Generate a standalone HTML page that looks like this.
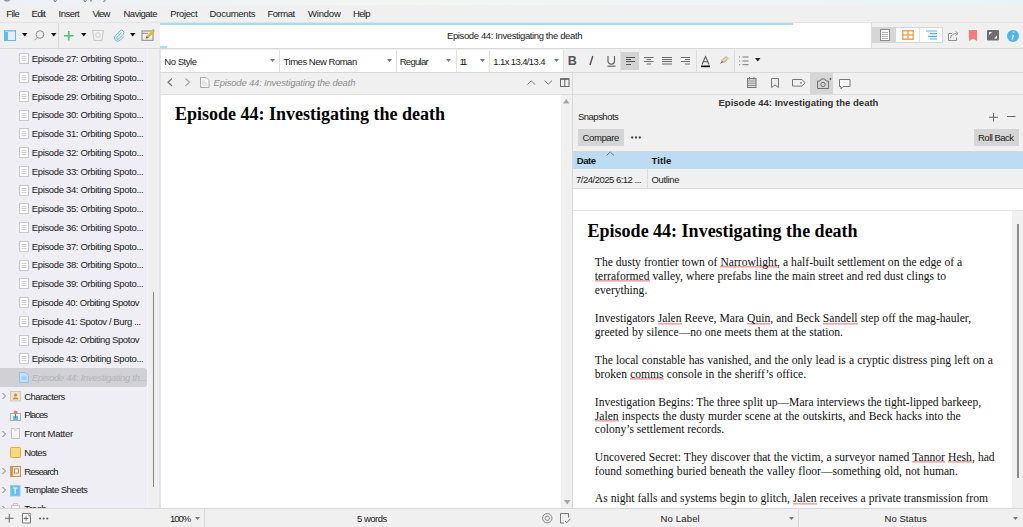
<!DOCTYPE html>
<html><head><meta charset="utf-8">
<style>
*{margin:0;padding:0;box-sizing:border-box}
html,body{width:1023px;height:527px;overflow:hidden;background:#f0f0f0;font-family:"Liberation Sans",sans-serif;font-size:9.5px;color:#1a1a1a}
.a{position:absolute}
.t{position:absolute;white-space:nowrap;line-height:11px}
svg{position:absolute;overflow:visible}
.p{position:absolute;left:594.8px;white-space:nowrap;font-family:"Liberation Serif",serif;font-size:11.6px;line-height:13.92px;color:#111}
.p u{text-decoration:none;background:linear-gradient(#f4a4a4,#f4a4a4) no-repeat 0 calc(100% - 0.8px)/100% 1.6px}
.h{position:absolute;white-space:nowrap;font-family:"Liberation Serif",serif;font-weight:bold;font-size:18px;line-height:20px;color:#000}
</style></head><body>

<div class="a" style="left:0;top:0;width:1023px;height:4.5px;background:linear-gradient(90deg,#edf1f6,#f2f5f2 40%,#eef5f5 70%,#e9f3f5)"></div>
<svg style="left:3px;top:-3px" width="9" height="5"><circle cx="4" cy="1" r="3.8" fill="#9a9a9a"/></svg>
<svg style="left:53px;top:0" width="60" height="3"><path d="M1 0.3c0 1.2 1.5 1.4 2.5 0.3M31 0.3c0 1.2 1.5 1.4 2.5 0.3M38 0v1.6M52 0.3c0 1 -1 1.4 -1.5 1" fill="none" stroke="#333" stroke-width="0.9"/></svg>
<div class="a" style="left:0;top:5px;width:1023px;height:17px;background:#f0f0f0"></div>
<div class="a" style="left:0;top:22px;width:1023px;height:1px;background:#e2e2e2"></div>
<div class="a" style="left:0;top:48px;width:1023px;height:1px;background:#d8d8d8"></div>
<div class="a" style="left:58px;top:23px;width:1px;height:25px;background:#d8d8d8"></div>
<div class="a" style="left:160px;top:23px;width:711px;height:25px;background:#fff"></div>
<div class="a" style="left:160px;top:23px;width:633px;height:2px;background:#a6def8"></div>
<div class="a" style="left:160px;top:46px;width:7px;height:2px;background:#a6def8"></div>
<div class="a" style="left:871px;top:23px;width:1px;height:25px;background:#dcdcdc"></div>
<div class="a" style="left:0;top:49px;width:147.5px;height:459px;background:#eeeef4"></div>
<div class="a" style="left:147.5px;top:49px;width:12.5px;height:459px;background:#f0f0f0"></div>
<div class="a" style="left:146.5px;top:49px;width:1.5px;height:459px;background:#f6f6f8"></div>
<div class="a" style="left:153px;top:292px;width:1.2px;height:195px;background:#858585"></div>
<div class="a" style="left:159px;top:49px;width:1.8px;height:459px;background:#e4e4e4"></div>
<div class="a" style="left:160px;top:72px;width:863px;height:1px;background:#d8d8d8"></div>
<div class="a" style="left:161px;top:50px;width:118px;height:22px;background:#fff"></div>
<div class="a" style="left:280px;top:50px;width:116px;height:22px;background:#fff"></div>
<div class="a" style="left:396px;top:50px;width:59.5px;height:22px;background:#fff"></div>
<div class="a" style="left:456px;top:50px;width:33.5px;height:22px;background:#fff"></div>
<div class="a" style="left:490px;top:50px;width:73px;height:22px;background:#fff"></div>
<div class="a" style="left:279.3px;top:50px;width:1px;height:22px;background:#e0e0e0"></div>
<div class="a" style="left:395.6px;top:50px;width:1px;height:22px;background:#e0e0e0"></div>
<div class="a" style="left:455.5px;top:50px;width:1px;height:22px;background:#e0e0e0"></div>
<div class="a" style="left:489.4px;top:50px;width:1px;height:22px;background:#e0e0e0"></div>
<div class="a" style="left:160.5px;top:94px;width:400.5px;height:414px;background:#fff"></div>
<div class="a" style="left:160.5px;top:93.5px;width:412px;height:1px;background:#dcdcdc"></div>
<div class="a" style="left:572px;top:73px;width:1px;height:435px;background:#d8d8d8"></div>
<div class="a" style="left:810px;top:73px;width:23px;height:21px;background:#d6d6d6"></div>
<div class="a" style="left:573px;top:94px;width:450px;height:1px;background:#dcdcdc"></div>
<div class="a" style="left:578px;top:129px;width:46px;height:17px;background:#d5d5d5"></div>
<div class="a" style="left:974px;top:129px;width:45px;height:17px;background:#d5d5d5"></div>
<div class="a" style="left:573px;top:151px;width:450px;height:18px;background:#bcdcf3"></div>
<div class="a" style="left:573px;top:150.5px;width:450px;height:1px;background:#d6d6d6"></div>
<div class="a" style="left:573px;top:169px;width:450px;height:19px;background:#f0f0f0"></div>
<div class="a" style="left:647px;top:169px;width:1px;height:19px;background:#dcdcdc"></div>
<div class="a" style="left:573px;top:188px;width:450px;height:1px;background:#dcdcdc"></div>
<div class="a" style="left:573px;top:189px;width:450px;height:21px;background:#fff"></div>
<div class="a" style="left:573px;top:210px;width:450px;height:1px;background:#e4e4e4"></div>
<div class="a" style="left:573px;top:211px;width:439px;height:297px;background:#fff"></div>
<div class="a" style="left:1012px;top:211px;width:11px;height:297px;background:#f0f0f0"></div>
<div class="a" style="left:1017px;top:224px;width:1.5px;height:254px;background:#8a8a8a"></div>
<div class="a" style="left:0;top:508px;width:1023px;height:1px;background:#d8d8d8"></div>
<div class="a" style="left:204px;top:509px;width:1px;height:18px;background:#d8d8d8"></div>
<div class="a" style="left:798px;top:509px;width:1px;height:18px;background:#d8d8d8"></div>

<div class="a" style="left:0;top:49px;width:147.5px;height:459px;overflow:hidden"><div class="a" style="left:0;top:-49px;width:147.5px;height:600px">
<svg style="left:18.5px;top:53.30px" width="10" height="11"><rect x="0.5" y="0.5" width="9" height="10" fill="#fff" stroke="#c8c8c8"/><path d="M2.5 3.5h5M2.5 5.5h5M2.5 7.5h5" stroke="#d0d0d0" stroke-width="1"/></svg>
<svg style="left:18.5px;top:72.05px" width="10" height="11"><rect x="0.5" y="0.5" width="9" height="10" fill="#fff" stroke="#c8c8c8"/><path d="M2.5 3.5h5M2.5 5.5h5M2.5 7.5h5" stroke="#d0d0d0" stroke-width="1"/></svg>
<svg style="left:18.5px;top:90.80px" width="10" height="11"><rect x="0.5" y="0.5" width="9" height="10" fill="#fff" stroke="#c8c8c8"/><path d="M2.5 3.5h5M2.5 5.5h5M2.5 7.5h5" stroke="#d0d0d0" stroke-width="1"/></svg>
<svg style="left:18.5px;top:109.55px" width="10" height="11"><rect x="0.5" y="0.5" width="9" height="10" fill="#fff" stroke="#c8c8c8"/><path d="M2.5 3.5h5M2.5 5.5h5M2.5 7.5h5" stroke="#d0d0d0" stroke-width="1"/></svg>
<svg style="left:18.5px;top:128.30px" width="10" height="11"><rect x="0.5" y="0.5" width="9" height="10" fill="#fff" stroke="#c8c8c8"/><path d="M2.5 3.5h5M2.5 5.5h5M2.5 7.5h5" stroke="#d0d0d0" stroke-width="1"/></svg>
<svg style="left:18.5px;top:147.05px" width="10" height="11"><rect x="0.5" y="0.5" width="9" height="10" fill="#fff" stroke="#c8c8c8"/><path d="M2.5 3.5h5M2.5 5.5h5M2.5 7.5h5" stroke="#d0d0d0" stroke-width="1"/></svg>
<svg style="left:18.5px;top:165.80px" width="10" height="11"><rect x="0.5" y="0.5" width="9" height="10" fill="#fff" stroke="#c8c8c8"/><path d="M2.5 3.5h5M2.5 5.5h5M2.5 7.5h5" stroke="#d0d0d0" stroke-width="1"/></svg>
<svg style="left:18.5px;top:184.55px" width="10" height="11"><rect x="0.5" y="0.5" width="9" height="10" fill="#fff" stroke="#c8c8c8"/><path d="M2.5 3.5h5M2.5 5.5h5M2.5 7.5h5" stroke="#d0d0d0" stroke-width="1"/></svg>
<svg style="left:18.5px;top:203.30px" width="10" height="11"><rect x="0.5" y="0.5" width="9" height="10" fill="#fff" stroke="#c8c8c8"/><path d="M2.5 3.5h5M2.5 5.5h5M2.5 7.5h5" stroke="#d0d0d0" stroke-width="1"/></svg>
<svg style="left:18.5px;top:222.05px" width="10" height="11"><rect x="0.5" y="0.5" width="9" height="10" fill="#fff" stroke="#c8c8c8"/><path d="M2.5 3.5h5M2.5 5.5h5M2.5 7.5h5" stroke="#d0d0d0" stroke-width="1"/></svg>
<svg style="left:18.5px;top:240.80px" width="10" height="11"><rect x="0.5" y="0.5" width="9" height="10" fill="#fff" stroke="#c8c8c8"/><path d="M2.5 3.5h5M2.5 5.5h5M2.5 7.5h5" stroke="#d0d0d0" stroke-width="1"/></svg>
<svg style="left:18.5px;top:259.55px" width="10" height="11"><rect x="0.5" y="0.5" width="9" height="10" fill="#fff" stroke="#c8c8c8"/><path d="M2.5 3.5h5M2.5 5.5h5M2.5 7.5h5" stroke="#d0d0d0" stroke-width="1"/></svg>
<svg style="left:18.5px;top:278.30px" width="10" height="11"><rect x="0.5" y="0.5" width="9" height="10" fill="#fff" stroke="#c8c8c8"/><path d="M2.5 3.5h5M2.5 5.5h5M2.5 7.5h5" stroke="#d0d0d0" stroke-width="1"/></svg>
<svg style="left:18.5px;top:297.05px" width="10" height="11"><rect x="0.5" y="0.5" width="9" height="10" fill="#fff" stroke="#c8c8c8"/><path d="M2.5 3.5h5M2.5 5.5h5M2.5 7.5h5" stroke="#d0d0d0" stroke-width="1"/></svg>
<svg style="left:18.5px;top:315.80px" width="10" height="11"><rect x="0.5" y="0.5" width="9" height="10" fill="#fff" stroke="#c8c8c8"/><path d="M2.5 3.5h5M2.5 5.5h5M2.5 7.5h5" stroke="#d0d0d0" stroke-width="1"/></svg>
<svg style="left:18.5px;top:334.55px" width="10" height="11"><rect x="0.5" y="0.5" width="9" height="10" fill="#fff" stroke="#c8c8c8"/><path d="M2.5 3.5h5M2.5 5.5h5M2.5 7.5h5" stroke="#d0d0d0" stroke-width="1"/></svg>
<svg style="left:18.5px;top:353.30px" width="10" height="11"><rect x="0.5" y="0.5" width="9" height="10" fill="#fff" stroke="#c8c8c8"/><path d="M2.5 3.5h5M2.5 5.5h5M2.5 7.5h5" stroke="#d0d0d0" stroke-width="1"/></svg>
<div class="a" style="left:0;top:367.85px;width:147px;height:19px;background:#d0d0d5;border-radius:0 3px 3px 0"></div>
<svg style="left:18.5px;top:372.05px" width="10" height="11"><path d="M0.5 0.5h6l3 3v7h-9z" fill="#bfe0f8" stroke="#8cc4ec"/><path d="M2.5 5h5M2.5 7h5" stroke="#8cc4ec" stroke-width="1"/></svg>
<svg style="left:1px;top:392.00px" width="6" height="8"><path d="M1.5 1l3 3l-3 3" fill="none" stroke="#777" stroke-width="1"/></svg>
<svg style="left:10px;top:390.80px" width="11" height="11"><rect x="0.5" y="0.5" width="10" height="9.5" fill="#f2e2c4" stroke="#c9c9c9"/><circle cx="5.5" cy="4" r="1.5" fill="#b98a45"/><path d="M2.5 8.2c0.8-2.4 5.2-2.4 6 0z" fill="#b98a45"/></svg>
<svg style="left:10px;top:409.55px" width="11" height="11"><rect x="0.5" y="3.5" width="10" height="7" fill="#e8f1f4" stroke="#aab"/><path d="M3 10V6h5v4" fill="#6fb8e8"/><circle cx="5.5" cy="2.5" r="2" fill="#f07b6b"/><path d="M5.5 4v4" stroke="#3a9a4a"/></svg>
<svg style="left:1px;top:429.50px" width="6" height="8"><path d="M1.5 1l3 3l-3 3" fill="none" stroke="#777" stroke-width="1"/></svg>
<svg style="left:10px;top:428.30px" width="11" height="11"><rect x="1.5" y="0.5" width="8" height="10" fill="#f4f4f4" stroke="#c4c4c4"/><rect x="4" y="0" width="3" height="3" fill="#ddd"/></svg>
<svg style="left:10px;top:447.05px" width="11" height="11"><rect x="0.5" y="0.5" width="10" height="10" rx="1" fill="#f8d77a" stroke="#d9ac40"/></svg>
<svg style="left:1px;top:467.00px" width="6" height="8"><path d="M1.5 1l3 3l-3 3" fill="none" stroke="#777" stroke-width="1"/></svg>
<svg style="left:10px;top:465.80px" width="11" height="11"><rect x="0.5" y="0.5" width="10" height="10" fill="#f7e6c6" stroke="#c4925a"/><rect x="0.5" y="0.5" width="2.5" height="10" fill="#d39a58"/><rect x="4.5" y="3" width="4" height="4" fill="#fff" stroke="#b07a40" stroke-width="0.8"/></svg>
<svg style="left:1px;top:485.75px" width="6" height="8"><path d="M1.5 1l3 3l-3 3" fill="none" stroke="#777" stroke-width="1"/></svg>
<svg style="left:10px;top:484.55px" width="11" height="11"><rect x="0.5" y="0.5" width="9.5" height="10.5" fill="#66bdf2" stroke="#8ccdf5"/><path d="M2.8 3h4.8M5.2 3v6" stroke="#fff" stroke-width="1.1"/></svg>
<svg style="left:1px;top:504.50px" width="6" height="8"><path d="M1.5 1l3 3l-3 3" fill="none" stroke="#777" stroke-width="1"/></svg>
<svg style="left:10px;top:503.30px" width="11" height="11"><rect x="1.5" y="2.5" width="8" height="8" fill="#f4f4f4" stroke="#c4c4c4"/><rect x="3.5" y="0.5" width="4" height="2" fill="none" stroke="#c4c4c4"/></svg>
<div class="t" style="left:31.70px;top:53.00px;letter-spacing:-0.336px;">Episode 27: Orbiting Spoto...</div>
<div class="t" style="left:31.70px;top:71.75px;letter-spacing:-0.336px;">Episode 28: Orbiting Spoto...</div>
<div class="t" style="left:31.70px;top:90.50px;letter-spacing:-0.336px;">Episode 29: Orbiting Spoto...</div>
<div class="t" style="left:31.70px;top:109.25px;letter-spacing:-0.336px;">Episode 30: Orbiting Spoto...</div>
<div class="t" style="left:31.70px;top:128.00px;letter-spacing:-0.336px;">Episode 31: Orbiting Spoto...</div>
<div class="t" style="left:31.70px;top:146.75px;letter-spacing:-0.336px;">Episode 32: Orbiting Spoto...</div>
<div class="t" style="left:31.70px;top:165.50px;letter-spacing:-0.336px;">Episode 33: Orbiting Spoto...</div>
<div class="t" style="left:31.70px;top:184.25px;letter-spacing:-0.336px;">Episode 34: Orbiting Spoto...</div>
<div class="t" style="left:31.70px;top:203.00px;letter-spacing:-0.336px;">Episode 35: Orbiting Spoto...</div>
<div class="t" style="left:31.70px;top:221.75px;letter-spacing:-0.336px;">Episode 36: Orbiting Spoto...</div>
<div class="t" style="left:31.70px;top:240.50px;letter-spacing:-0.336px;">Episode 37: Orbiting Spoto...</div>
<div class="t" style="left:31.70px;top:259.25px;letter-spacing:-0.336px;">Episode 38: Orbiting Spoto...</div>
<div class="t" style="left:31.70px;top:278.00px;letter-spacing:-0.336px;">Episode 39: Orbiting Spoto...</div>
<div class="t" style="left:31.70px;top:296.75px;letter-spacing:-0.400px;">Episode 40: Orbiting Spotov</div>
<div class="t" style="left:31.70px;top:315.50px;letter-spacing:-0.411px;">Episode 41: Spotov / Burg ...</div>
<div class="t" style="left:31.70px;top:334.25px;letter-spacing:-0.400px;">Episode 42: Orbiting Spotov</div>
<div class="t" style="left:31.70px;top:353.00px;letter-spacing:-0.336px;">Episode 43: Orbiting Spoto...</div>
<div class="t" style="left:31.70px;top:371.75px;letter-spacing:-0.313px;font-style:italic;color:#b4b4bc">Episode 44: Investigating th...</div>
<div class="t" style="left:24.30px;top:390.50px;letter-spacing:-0.611px;">Characters</div>
<div class="t" style="left:24.30px;top:409.25px;letter-spacing:-0.960px;">Places</div>
<div class="t" style="left:24.30px;top:428.00px;letter-spacing:-0.264px;">Front Matter</div>
<div class="t" style="left:24.30px;top:446.75px;letter-spacing:-0.575px;">Notes</div>
<div class="t" style="left:24.30px;top:465.50px;letter-spacing:-0.914px;">Research</div>
<div class="t" style="left:24.30px;top:484.25px;letter-spacing:-0.521px;">Template Sheets</div>
<div class="t" style="left:24.30px;top:503.00px;letter-spacing:-0.400px;">Trash</div>
</div></div>
<div class="t" style="left:6.30px;top:7.70px;letter-spacing:-0.600px;">File</div>
<div class="t" style="left:31.60px;top:7.70px;letter-spacing:-0.700px;">Edit</div>
<div class="t" style="left:58.50px;top:7.70px;letter-spacing:-0.500px;">Insert</div>
<div class="t" style="left:92.50px;top:7.70px;letter-spacing:-0.833px;">View</div>
<div class="t" style="left:123.50px;top:7.70px;letter-spacing:-0.500px;">Navigate</div>
<div class="t" style="left:170.30px;top:7.70px;letter-spacing:-0.383px;">Project</div>
<div class="t" style="left:209.50px;top:7.70px;letter-spacing:-0.250px;">Documents</div>
<div class="t" style="left:267.50px;top:7.70px;letter-spacing:-0.500px;">Format</div>
<div class="t" style="left:308.00px;top:7.70px;letter-spacing:-0.200px;">Window</div>
<div class="t" style="left:353.00px;top:7.70px;letter-spacing:-0.667px;">Help</div>
<div class="t" style="left:447.00px;top:30.20px;letter-spacing:-0.382px;">Episode 44: Investigating the death</div>
<div class="t" style="left:164.30px;top:55.80px;letter-spacing:-0.457px;">No Style</div>
<div class="t" style="left:283.60px;top:55.80px;letter-spacing:-0.486px;">Times New Roman</div>
<div class="t" style="left:399.70px;top:55.80px;letter-spacing:-0.717px;">Regular</div>
<div class="t" style="left:459.50px;top:55.80px;letter-spacing:-2.000px;">11</div>
<div class="t" style="left:493.30px;top:55.80px;letter-spacing:-0.615px;">1.1x 13.4/13.4</div>
<div class="t" style="left:213.50px;top:77.20px;letter-spacing:-0.191px;font-style:italic;color:#8c8c8c">Episode 44: Investigating the death</div>
<div class="t" style="left:718.50px;top:97.00px;letter-spacing:0.015px;font-weight:bold;color:#333">Episode 44: Investigating the death</div>
<div class="t" style="left:578.00px;top:111.10px;letter-spacing:-0.513px;">Snapshots</div>
<div class="t" style="left:582.60px;top:132.00px;letter-spacing:-0.400px;">Compare</div>
<div class="t" style="left:978.00px;top:131.80px;letter-spacing:-0.500px;">Roll Back</div>
<div class="t" style="left:576.70px;top:155.00px;letter-spacing:-0.400px;font-weight:bold;color:#111">Date</div>
<div class="t" style="left:651.50px;top:155.00px;letter-spacing:0.125px;font-weight:bold;color:#111">Title</div>
<div class="t" style="left:576.00px;top:174.00px;letter-spacing:-0.500px;">7/24/2025 6:12 ...</div>
<div class="t" style="left:651.50px;top:174.00px;letter-spacing:-0.333px;">Outline</div>
<div class="t" style="left:170.00px;top:513.00px;letter-spacing:-1.000px;">100%</div>
<div class="t" style="left:357.00px;top:513.00px;letter-spacing:-0.500px;">5 words</div>
<div class="t" style="left:660.60px;top:513.00px;letter-spacing:0.157px;">No Label</div>
<div class="t" style="left:884.50px;top:513.00px;letter-spacing:0.062px;">No Status</div>
<div class="h" style="left:175px;top:104.4px">Episode 44: Investigating the death</div>
<div class="h" style="left:587.6px;top:220.9px">Episode 44: Investigating the death</div>
<div class="p" style="top:255.80px;word-spacing:0.077px">The dusty frontier town of <u>Narrowlight</u>, a half-built settlement on the edge of a</div>
<div class="p" style="top:269.72px;word-spacing:0.125px"><u>terraformed</u> valley, where prefabs line the main street and red dust clings to</div>
<div class="p" style="top:283.64px;word-spacing:0.000px">everything.</div>
<div class="p" style="top:312.08px;word-spacing:0.145px">Investigators <u>Jalen</u> Reeve, Mara <u>Quin</u>, and Beck <u>Sandell</u> step off the mag-hauler,</div>
<div class="p" style="top:326.00px;word-spacing:0.075px">greeted by silence—no one meets them at the station.</div>
<div class="p" style="top:353.84px;word-spacing:0.269px">The local constable has vanished, and the only lead is a cryptic distress ping left on a</div>
<div class="p" style="top:367.76px;word-spacing:0.250px">broken <u>comms</u> console in the sheriff’s office.</div>
<div class="p" style="top:395.60px;word-spacing:-0.056px">Investigation Begins: The three split up—Mara interviews the tight-lipped barkeep,</div>
<div class="p" style="top:409.52px;word-spacing:0.308px"><u>Jalen</u> inspects the dusty murder scene at the outskirts, and Beck hacks into the</div>
<div class="p" style="top:423.44px;word-spacing:-0.200px">colony’s settlement records.</div>
<div class="p" style="top:450.68px;word-spacing:0.208px">Uncovered Secret: They discover that the victim, a surveyor named <u>Tannor</u> <u>Hesh</u>, had</div>
<div class="p" style="top:464.60px;word-spacing:0.444px">found something buried beneath the valley floor—something old, not human.</div>
<div class="p" style="top:492.44px;word-spacing:0.077px">As night falls and systems begin to glitch, <u>Jalen</u> receives a private transmission from</div>
<!-- toolbar icons -->
<svg style="left:4px;top:30px" width="12" height="11"><rect x="0.5" y="0.5" width="11" height="10" fill="#ececec" stroke="#5cbcf4" stroke-width="1"/><rect x="0" y="0" width="12" height="2" fill="#5cbcf4"/><rect x="0" y="0" width="4" height="11" fill="#5cbcf4"/><path d="M1 1.2h10" stroke="#fff" stroke-width="0.6"/></svg>
<svg style="left:22px;top:33px" width="6" height="4"><path d="M0 0h5.5l-2.75 3.5z" fill="#111"/></svg>
<svg style="left:34px;top:29.5px" width="11" height="11"><circle cx="6" cy="4.5" r="3.8" fill="none" stroke="#8a8a8a" stroke-width="1"/><path d="M3.3 7.3L0.5 10.2" stroke="#8a8a8a" stroke-width="1"/></svg>
<svg style="left:51px;top:33px" width="6" height="4"><path d="M0 0h5.5l-2.75 3.5z" fill="#111"/></svg>
<svg style="left:64px;top:30.5px" width="10" height="10"><path d="M4.75 0v9.5M0 4.75h9.5" stroke="#4cc070" stroke-width="1.6"/></svg>
<svg style="left:81px;top:33px" width="6" height="4"><path d="M0 0h5.5l-2.75 3.5z" fill="#111"/></svg>
<svg style="left:92px;top:30px" width="12" height="11"><path d="M0.5 0.5h11l-1.6 10h-7.8z" fill="none" stroke="#c8c8c8" stroke-width="1"/><circle cx="6" cy="5" r="2.3" fill="none" stroke="#cfcfcf" stroke-width="1"/></svg>
<svg style="left:114px;top:30px" width="11" height="11"><path d="M7.5 2.5L3 7.3a1.2 1.2 0 0 0 1.7 1.7L9.3 4.2a2.3 2.3 0 0 0 -3.3 -3.3L1.5 5.7a3.2 3.2 0 0 0 4.6 4.6L9.8 6.6" fill="none" stroke="#5ab8f0" stroke-width="1"/></svg>
<svg style="left:130px;top:33px" width="6" height="4"><path d="M0 0h5.5l-2.75 3.5z" fill="#111"/></svg>
<svg style="left:141px;top:29px" width="14" height="12"><rect x="1" y="2" width="11" height="9.3" fill="none" stroke="#8e8e8e" stroke-width="1.1"/><path d="M1 4.3h6" stroke="#8e8e8e" stroke-width="1"/><path d="M4.8 9.6l0.8-2.6l5.6-5.6l1.9 1.9l-5.6 5.6z" fill="#eab530"/><path d="M4.8 9.6l0.8-2.6l1.8 1.8z" fill="#666"/><path d="M11.7 0.3l1.8 1.8" stroke="#777" stroke-width="1"/></svg>
<!-- right toolbar -->
<div class="a" style="left:872px;top:27px;width:71px;height:16px;border:1px solid #d6d6d6;background:#fff"></div>
<div class="a" style="left:873px;top:28px;width:23px;height:14px;background:#d6d6d6"></div>
<div class="a" style="left:919px;top:28px;width:1px;height:14px;background:#e4e4e4"></div>
<svg style="left:880px;top:29px" width="10" height="12"><rect x="0.5" y="0.5" width="9" height="11" fill="#fff" stroke="#8a8a8a"/><path d="M2 3.5h6M2 5.5h6M2 7.5h6M2 9.5h6" stroke="#b0b0b0" stroke-width="1"/></svg>
<svg style="left:902px;top:30px" width="12" height="10"><rect x="0.75" y="0.75" width="10.5" height="8.5" fill="none" stroke="#eea860" stroke-width="1.5"/><path d="M6 0v10M0 5h12" stroke="#eea860" stroke-width="1.5"/></svg>
<svg style="left:926px;top:30px" width="12" height="10"><path d="M0 1h11M4 3.7h7M2 6.3h9M4 9h7" stroke="#49b2ee" stroke-width="1.2"/></svg>
<svg style="left:947px;top:29.5px" width="12" height="12"><path d="M5 3.5H1.5v7h8V7.5" fill="none" stroke="#8e8e8e" stroke-width="1"/><path d="M3.5 8c0.5-3 3-4.5 6-4.5" fill="none" stroke="#8e8e8e" stroke-width="1"/><path d="M8.5 1.5l2.5 2l-2.5 2" fill="none" stroke="#8e8e8e" stroke-width="1"/></svg>
<svg style="left:969px;top:30px" width="9" height="11"><path d="M0 0h8v11l-4-2.5l-4 2.5z" fill="#f97a7a"/></svg>
<svg style="left:987px;top:30px" width="12" height="11"><rect x="0" y="0" width="12" height="10.5" rx="1" fill="#6e6e6e"/><path d="M2 2h3l-3 3zM10 8.5H7l3-3z" fill="#fff"/></svg>
<svg style="left:1007px;top:29.5px" width="12" height="12"><circle cx="6" cy="6" r="6" fill="#4db5ee"/><path d="M6.6 2.3v0.01" stroke="#fff" stroke-width="1.6" stroke-linecap="round"/><path d="M6.3 4.8L5.2 9.6" stroke="#fff" stroke-width="1.4"/></svg>

<!-- format bar arrows -->
<svg style="left:270px;top:59px" width="6" height="4"><path d="M0 0h5l-2.5 3z" fill="#777"/></svg>
<svg style="left:387px;top:59px" width="6" height="4"><path d="M0 0h5l-2.5 3z" fill="#777"/></svg>
<svg style="left:446px;top:59px" width="6" height="4"><path d="M0 0h5l-2.5 3z" fill="#777"/></svg>
<svg style="left:480px;top:59px" width="6" height="4"><path d="M0 0h5l-2.5 3z" fill="#777"/></svg>
<svg style="left:554px;top:59px" width="6" height="4"><path d="M0 0h5l-2.5 3z" fill="#777"/></svg>
<div class="a" style="left:563px;top:50px;width:1px;height:22px;background:#e0e0e0"></div>
<div class="t" style="left:567.8px;top:54px;font-size:12.5px;line-height:14px;font-weight:bold;color:#555">B</div>
<svg style="left:589px;top:56px" width="5" height="9"><path d="M3.8 0L1 9" stroke="#555" stroke-width="1.4"/></svg>
<svg style="left:606.5px;top:56px" width="9" height="11"><path d="M1 0v5a3.25 3.25 0 0 0 6.5 0V0" fill="none" stroke="#666" stroke-width="1.2"/><path d="M0.5 10.2h8" stroke="#666" stroke-width="1.2"/></svg>
<div class="a" style="left:620px;top:50px;width:1px;height:22px;background:#e0e0e0"></div>
<div class="a" style="left:620.5px;top:52px;width:18.5px;height:17.5px;background:#d3d3d3"></div>
<svg style="left:626px;top:56px" width="10" height="10"><path d="M0 1.5h9M0 3.5h5M0 5.5h9M0 8.5h5" stroke="#555" stroke-width="1"/></svg>
<svg style="left:643.5px;top:56px" width="10" height="10"><path d="M0 1.5h9.5M2.5 3.5h4.5M0 5.5h9.5M2.5 8h4.5" stroke="#6a6a6a" stroke-width="1"/></svg>
<svg style="left:662px;top:56px" width="10" height="10"><path d="M0 1.5h10M0 3.5h10M0 5.5h10M0 8h10" stroke="#6a6a6a" stroke-width="1"/></svg>
<svg style="left:681px;top:56px" width="10" height="10"><path d="M0 1.5h9M4 3.5h5M0 5.5h9M4 8h5" stroke="#6a6a6a" stroke-width="1"/></svg>
<div class="a" style="left:695.5px;top:50px;width:1px;height:22px;background:#dcdcdc"></div>
<svg style="left:701px;top:55.5px" width="10" height="12"><path d="M1 8.5L4.5 0.5L8 8.5M2.3 5.8h4.4" fill="none" stroke="#555" stroke-width="1.1"/><rect x="0" y="9.5" width="9" height="1.7" fill="#111"/></svg>
<svg style="left:719px;top:55px" width="10" height="10"><path d="M3 5.5L7 1.5l2 2l-4 4z" fill="#f0d8a0" stroke="#9a8a70" stroke-width="0.7"/><path d="M1 9l2-3.5l1.5 1.5z" fill="#7a6a5a"/></svg>
<div class="a" style="left:734px;top:50px;width:1px;height:22px;background:#dcdcdc"></div>
<svg style="left:738.5px;top:55.5px" width="10" height="10"><path d="M0 1h1.2M0 5h1.2M0 8.7h1.2" stroke="#777" stroke-width="1"/><path d="M3.5 1h6M3.5 5h6M3.5 8.7h6" stroke="#666" stroke-width="0.9"/></svg>
<svg style="left:754.5px;top:58px" width="6" height="4"><path d="M0 0h5.5l-2.75 3.5z" fill="#222"/></svg>

<!-- editor nav bar -->
<svg style="left:167px;top:78px" width="6" height="9"><path d="M5 0.5L1 4.25L5 8" fill="none" stroke="#707070" stroke-width="1.1"/></svg>
<svg style="left:185px;top:78px" width="6" height="9"><path d="M0.5 0.5L4.5 4.25L0.5 8" fill="none" stroke="#a0a0a0" stroke-width="1.1"/></svg>
<svg style="left:200px;top:77px" width="10" height="11"><path d="M0.5 0.5h5.5l3 3v7h-8.5z" fill="#fff" stroke="#a8a8a8"/><path d="M2 4h3M2 6h5.5M2 8h5.5" stroke="#b8b8b8" stroke-width="0.7"/></svg>
<svg style="left:527px;top:80px" width="9" height="5"><path d="M0.5 4.5L4.25 0.8L8 4.5" fill="none" stroke="#777" stroke-width="1"/></svg>
<svg style="left:544px;top:80px" width="9" height="5"><path d="M0.5 0.5L4.25 4.2L8 0.5" fill="none" stroke="#777" stroke-width="1"/></svg>
<svg style="left:560px;top:78px" width="10" height="9"><rect x="0.5" y="0.8" width="8.5" height="7.7" fill="none" stroke="#666" stroke-width="1"/><path d="M0.5 1h8.5" stroke="#666" stroke-width="1.6"/><path d="M4.75 0.5v8" stroke="#666" stroke-width="1"/></svg>
<!-- editor scrollbar arrows -->
<svg style="left:563px;top:99px" width="7" height="5"><path d="M0 4.5h6.5L3.25 0z" fill="#a6a6a6"/></svg>
<svg style="left:563.5px;top:500px" width="7" height="5"><path d="M0 0h6.5L3.25 4.5z" fill="#a6a6a6"/></svg>

<!-- inspector header icons -->
<svg style="left:747px;top:77px" width="10" height="11"><rect x="0.5" y="1.5" width="8.5" height="9" fill="#d8d8d8" stroke="#777" stroke-width="1"/><path d="M0.5 4h8.5M0.5 6.3h8.5M0.5 8.5h8.5" stroke="#888" stroke-width="0.8"/><path d="M2.5 0v2.5M7 0v2.5" stroke="#777" stroke-width="1"/></svg>
<svg style="left:771px;top:78px" width="9" height="10"><path d="M0.5 0.5h7v9l-3.5-2.5l-3.5 2.5z" fill="#ececec" stroke="#777" stroke-width="1"/></svg>
<svg style="left:792px;top:79px" width="14" height="8"><path d="M0.5 0.5h9.5l3 3.3l-3 3.3h-9.5z" fill="none" stroke="#777" stroke-width="1"/><circle cx="9" cy="3.8" r="0.9" fill="#777"/></svg>
<svg style="left:816.5px;top:78px" width="15" height="11"><path d="M0.5 3h2.5l1.3-2h3.5l1.3 2h2.5v7.5h-11z" fill="none" stroke="#707070" stroke-width="1"/><circle cx="6" cy="6.5" r="2.2" fill="none" stroke="#707070" stroke-width="1"/><circle cx="13.5" cy="1" r="0.9" fill="#555"/></svg>
<svg style="left:839px;top:78.5px" width="12" height="11"><path d="M0.5 0.5h10.5v7h-7l-2 2.5v-2.5h-1.5z" fill="#f8f8f8" stroke="#777" stroke-width="1"/></svg>

<!-- inspector body -->
<svg style="left:989px;top:112.5px" width="10" height="9"><path d="M4.5 0v8.5M0 4.25h9" stroke="#666" stroke-width="1"/></svg>
<svg style="left:1006.5px;top:116px" width="9" height="2"><path d="M0 0.5h8.5" stroke="#666" stroke-width="1"/></svg>
<svg style="left:630.5px;top:136px" width="11" height="3"><circle cx="1.2" cy="1.5" r="1.15" fill="#444"/><circle cx="5" cy="1.5" r="1.15" fill="#444"/><circle cx="8.8" cy="1.5" r="1.15" fill="#444"/></svg>
<svg style="left:606px;top:151px" width="9" height="5"><path d="M0.5 4.5L4.25 1L8 4.5" fill="none" stroke="#666" stroke-width="0.9"/></svg>

<!-- footer icons -->
<svg style="left:5px;top:514px" width="9" height="9"><path d="M4.25 0v8.5M0 4.25h8.5" stroke="#666" stroke-width="1"/></svg>
<svg style="left:22px;top:513px" width="10" height="11"><path d="M6.5 0.5H0.5v9.5h8V3" fill="#fafafa" stroke="#777" stroke-width="1"/><rect x="6.8" y="0.5" width="1.7" height="2.5" fill="#fff" stroke="#888" stroke-width="0.8"/><path d="M1.8 5.5h4.4M4 3.3v4.4" stroke="#666" stroke-width="1"/></svg>
<svg style="left:39px;top:517px" width="10" height="3"><circle cx="1.1" cy="1.5" r="1.1" fill="#666"/><circle cx="4.7" cy="1.5" r="1.1" fill="#666"/><circle cx="8.3" cy="1.5" r="1.1" fill="#666"/></svg>
<svg style="left:195px;top:517px" width="6" height="4"><path d="M0 0h5l-2.5 3z" fill="#777"/></svg>
<svg style="left:542px;top:512.5px" width="11" height="11"><circle cx="5.25" cy="5.25" r="4.7" fill="none" stroke="#888" stroke-width="1"/><circle cx="5.25" cy="5.25" r="2.2" fill="none" stroke="#888" stroke-width="1"/></svg>
<svg style="left:560px;top:513px" width="11" height="11"><path d="M4 10H0.5V0.5h8v4" fill="none" stroke="#777" stroke-width="1"/><path d="M5 8l1.8 1.8l3.5-4" fill="none" stroke="#777" stroke-width="1"/></svg>
<svg style="left:789px;top:516.5px" width="6" height="4"><path d="M0 0h5l-2.5 3z" fill="#777"/></svg>
<svg style="left:1013px;top:516.5px" width="6" height="4"><path d="M0 0h5l-2.5 3z" fill="#777"/></svg>

</body></html>
